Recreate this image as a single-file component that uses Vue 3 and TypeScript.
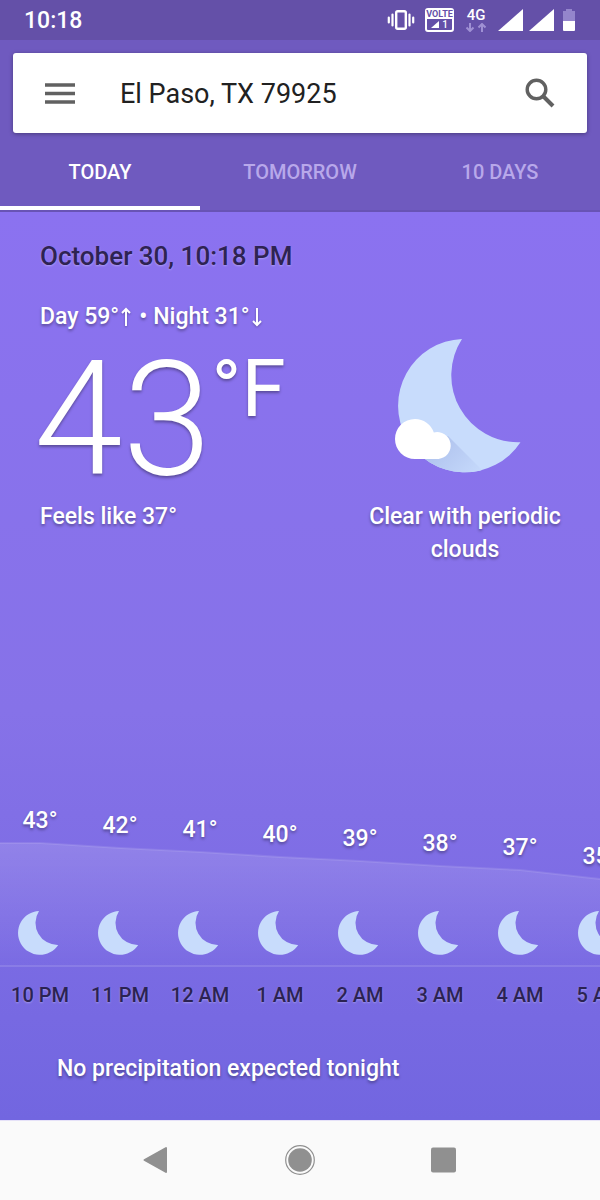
<script setup lang="ts">
import { computed, ref } from 'vue'

interface Hour {
  label: string
  temp: number
}

const COLUMN = 80
const PEAK = 43
const STEP = 4.5
const CHART_HEIGHT = 126

const place = ref('El Paso, TX 79925')
const tabs = ['Today', 'Tomorrow', '10 Days']
const active = ref('Today')

const hours: Hour[] = [
  { label: '10 PM', temp: 43 },
  { label: '11 PM', temp: 42 },
  { label: '12 AM', temp: 41 },
  { label: '1 AM', temp: 40 },
  { label: '2 AM', temp: 39 },
  { label: '3 AM', temp: 38 },
  { label: '4 AM', temp: 37 },
  { label: '5 AM', temp: 35 },
]

const drop = (temp: number): number => Math.round((PEAK - temp) * STEP)
const chartWidth = hours.length * COLUMN

const line = computed(() => {
  const points = hours.map((h, i) => `${i * COLUMN + COLUMN / 2},${drop(h.temp) + 1}`)
  const last = drop(hours[hours.length - 1].temp) + 5
  return `0,1 ${points.join(' ')} ${chartWidth},${last}`
})
const area = computed(() => `${line.value} ${chartWidth},${CHART_HEIGHT} 0,${CHART_HEIGHT}`)

const moon = 'M67 3A66.700 66.700 0 1 0 125.500 106.300A67 67 0 0 1 67 3Z'
</script>

<template>
  <div class="screen">
    <div class="status">
      <span class="clock">10:18</span>
      <div class="indicators">
        <svg class="vibrate" viewBox="0 0 28 22" width="28" height="22" aria-hidden="true">
          <rect x="9.200" y="2.200" width="9.600" height="17.600" rx="1.500" fill="none" stroke="#fff" stroke-width="2.400" />
          <path d="M5.500 5.500v11M1.800 8.500v5M22.500 5.500v11M26.200 8.500v5" stroke="#fff" stroke-width="2.200" fill="none" stroke-linecap="round" />
        </svg>
        <div class="volte">
          <span class="volte-name">VOLTE</span>
          <span class="volte-sim">
            <svg viewBox="0 0 8 7" width="8" height="7" aria-hidden="true"><path d="M8 0v7H0z" fill="#fff" /></svg>
            1
          </span>
        </div>
        <div class="network">
          <span>4G</span>
          <svg viewBox="0 0 22 9" width="22" height="9" aria-hidden="true">
            <path d="M5 0v8M1.500 4.500L5 8l3.500-3.500M17 9V1M13.500 4.500L17 1l3.500 3.500" fill="none" stroke="#9f90d4" stroke-width="2" />
          </svg>
        </div>
        <svg class="signal" viewBox="0 0 25 22" width="25" height="22" aria-hidden="true"><path d="M25 0v22H0z" fill="#fff" /></svg>
        <svg class="signal" viewBox="0 0 25 22" width="25" height="22" aria-hidden="true"><path d="M25 0v22H0z" fill="#fff" /></svg>
        <svg class="battery" viewBox="0 0 12 22" width="12" height="22" aria-hidden="true">
          <path d="M3 0h6v2h3v10H0V2h3z" fill="#9485cc" />
          <path d="M0 12h12v9a1 1 0 0 1-1 1H1a1 1 0 0 1-1-1z" fill="#fff" />
        </svg>
      </div>
    </div>

    <header class="header">
      <form class="search" @submit.prevent>
        <button type="button" class="icon-button" aria-label="Menu">
          <svg viewBox="0 0 30 21" width="30" height="21"><path d="M0 2h30M0 10.500h30M0 19h30" stroke="#616161" stroke-width="3.300" /></svg>
        </button>
        <input v-model="place" class="place" type="text" aria-label="Location" />
        <button type="submit" class="icon-button" aria-label="Search">
          <svg viewBox="0 0 30 30" width="30" height="30">
            <circle cx="11.500" cy="11.500" r="9.300" fill="none" stroke="#616161" stroke-width="3.400" />
            <path d="M18.500 18.500L28 28" stroke="#616161" stroke-width="4" />
          </svg>
        </button>
      </form>
      <nav class="tabs" role="tablist">
        <button
          v-for="tab in tabs"
          :key="tab"
          type="button"
          role="tab"
          class="tab"
          :class="{ active: tab === active }"
          :aria-selected="tab === active"
          @click="active = tab"
        >
          {{ tab }}
        </button>
      </nav>
    </header>

    <main class="content">
      <section class="current">
        <div class="reading">
          <h1 class="date">October 30, 10:18 PM</h1>
          <p class="range">
            <span>Day 59°</span>
            <svg class="arrow" viewBox="0 0 14 20" width="14" height="20" aria-label="high"><path d="M7 19V2M3 6l4-4 4 4" /></svg>
            <span class="dot">•</span>
            <span>Night 31°</span>
            <svg class="arrow" viewBox="0 0 14 20" width="14" height="20" aria-label="low"><path d="M7 1v17M3 14l4 4 4-4" /></svg>
          </p>
          <div class="temperature">
            <span class="degrees">43</span><span class="unit">°F</span>
          </div>
          <p class="feels">Feels like 37°</p>
        </div>
        <div class="condition">
          <svg class="condition-icon" viewBox="0 0 140 140" width="140" height="140" aria-hidden="true">
            <defs>
              <linearGradient id="cloud-shade" gradientUnits="userSpaceOnUse" x1="45" y1="105" x2="80" y2="140">
                <stop offset="0" stop-color="#b0c3ee" />
                <stop offset="1" stop-color="#c5d9fb" />
              </linearGradient>
              <clipPath id="moon-clip"><path :d="moon" /></clipPath>
            </defs>
            <path :d="moon" fill="#c8dcfc" />
            <path d="M53 100L96 143H50L20 118z" fill="url(#cloud-shade)" clip-path="url(#moon-clip)" />
            <path d="M20 83a20 20 0 0 1 18.800 13.500A13.500 13.500 0 1 1 43.500 123H20a20 20 0 0 1 0-40z" fill="#fff" />
          </svg>
          <p class="summary">Clear with periodic clouds</p>
        </div>
      </section>

      <section class="hourly" aria-label="Hourly forecast">
        <svg class="chart" :viewBox="`0 0 ${chartWidth} ${CHART_HEIGHT}`" :width="chartWidth" :height="CHART_HEIGHT" aria-hidden="true">
          <defs>
            <linearGradient id="chart-fill" x1="0" y1="0" x2="0" y2="1">
              <stop offset="0" stop-color="#fff" stop-opacity="0.14" />
              <stop offset="1" stop-color="#fff" stop-opacity="0" />
            </linearGradient>
          </defs>
          <polygon :points="area" fill="url(#chart-fill)" />
          <polyline :points="line" fill="none" stroke="#fff" stroke-opacity="0.1" stroke-width="2" />
        </svg>
        <ol class="hours">
          <li v-for="hour in hours" :key="hour.label" class="hour">
            <div class="plot">
              <span class="hour-temp" :style="{ marginTop: `${drop(hour.temp)}px` }">{{ hour.temp }}°</span>
              <svg class="hour-icon" viewBox="3 3 134 134" width="44" height="44" aria-hidden="true"><path :d="moon" fill="#c8dcfc" /></svg>
            </div>
            <span class="hour-label">{{ hour.label }}</span>
          </li>
        </ol>
      </section>

      <p class="outlook">No precipitation expected tonight</p>
    </main>

    <footer class="navbar">
      <button type="button" class="nav-button" aria-label="Back">
        <svg viewBox="0 0 32 32" width="32" height="32"><path d="M4.500 16L26 4v24z" fill="#909090" stroke="#909090" stroke-width="2" stroke-linejoin="round" /></svg>
      </button>
      <button type="button" class="nav-button" aria-label="Home">
        <svg viewBox="0 0 32 32" width="32" height="32">
          <circle cx="16" cy="16" r="14.300" fill="none" stroke="#909090" stroke-width="1.200" />
          <circle cx="16" cy="16" r="11.800" fill="#909090" />
        </svg>
      </button>
      <button type="button" class="nav-button" aria-label="Recent apps">
        <svg viewBox="0 0 32 32" width="32" height="32"><rect x="3" y="3.500" width="25" height="25" rx="2" fill="#909090" /></svg>
      </button>
    </footer>
  </div>
</template>

<style>
body {
  margin: 0;
}
</style>

<style scoped>
.screen {
  display: flex;
  flex-direction: column;
  min-height: 100vh;
  overflow: hidden;
  font-family: Roboto, "Liberation Sans", sans-serif;
  font-weight: 500;
  color: #fff;
}

h1,
p,
ol {
  margin: 0;
  padding: 0;
  font-weight: 500;
}

svg {
  display: block;
  flex: none;
}

button {
  padding: 0;
  border: 0;
  background: none;
  font: inherit;
  color: inherit;
  cursor: pointer;
}

.status {
  display: flex;
  align-items: center;
  justify-content: space-between;
  height: 40px;
  padding: 0 24px;
  background: #6450a8;
}

.clock {
  font-size: 23px;
  line-height: 40px;
  padding-top: 2px;
}

.indicators {
  display: flex;
  align-items: center;
  gap: 6px;
}

.vibrate {
  margin-right: 4px;
}

.volte {
  box-sizing: border-box;
  display: flex;
  flex-direction: column;
  width: 29px;
  height: 24px;
  border: 2px solid #fff;
  border-radius: 3px;
}

.volte-name {
  display: flex;
  justify-content: center;
  background: #fff;
  color: #6450a8;
  font-size: 9px;
  font-weight: 700;
  line-height: 9px;
}

.volte-sim {
  display: flex;
  align-items: center;
  justify-content: center;
  gap: 3px;
  font-size: 10px;
  line-height: 11px;
}

.network {
  display: flex;
  flex-direction: column;
  align-items: center;
  gap: 1px;
  margin: 0 5px;
  font-size: 15px;
  line-height: 13px;
}

.battery {
  margin: 0 1px 0 3px;
}

.header {
  box-sizing: border-box;
  padding-top: 13px;
  background: #6f5abf;
  border-bottom: 2px solid #6853b5;
}

.search {
  display: flex;
  align-items: center;
  height: 80px;
  margin: 0 13px;
  padding: 0 15px;
  box-sizing: border-box;
  background: #fff;
  border-radius: 3px;
  box-shadow: 0 1px 4px rgba(0, 0, 0, 0.35);
}

.icon-button {
  display: flex;
  align-items: center;
  justify-content: center;
  flex: none;
  width: 64px;
  height: 64px;
}

.place {
  flex: 1;
  min-width: 0;
  margin-left: 28px;
  padding: 2px 0 0;
  border: 0;
  outline: 0;
  background: none;
  font: 400 27px/32px Roboto, "Liberation Sans", sans-serif;
  color: #212121;
}

.tabs {
  display: grid;
  grid-template-columns: repeat(3, 1fr);
}

.tab {
  height: 77px;
  border-top: 4px solid transparent;
  border-bottom: 4px solid transparent;
  font-size: 20px;
  line-height: 24px;
  text-transform: uppercase;
  color: #b8a8ea;
}

.tab.active {
  border-bottom-color: #fff;
  color: #fff;
}

.content {
  display: flex;
  flex-direction: column;
  flex: 1;
  background: linear-gradient(#8b72f0, #8672e8 55%, #7266e0);
}

.current {
  display: flex;
  justify-content: space-between;
  padding: 28px 20px 0 40px;
  font-size: 23px;
  line-height: 32px;
  text-shadow: 0 2px 3px rgba(0, 0, 0, 0.35);
}

.date {
  font-size: 26px;
  line-height: 32px;
  color: #2e2352;
  text-shadow: 0 1px 2px rgba(255, 255, 255, 0.3);
  white-space: nowrap;
}

.range {
  display: flex;
  align-items: center;
  margin-top: 29px;
}

.arrow {
  fill: none;
  stroke: #fff;
  stroke-width: 2;
  filter: drop-shadow(0 1px 1px rgba(0, 0, 0, 0.3));
}

.dot {
  margin: 0 6px;
}

.temperature {
  display: flex;
  align-items: flex-start;
  height: 168px;
}

.degrees {
  margin-left: -6px;
  font-size: 160px;
  font-weight: 300;
  line-height: 174px;
}

.unit {
  font-size: 80px;
  font-weight: 400;
  line-height: 112px;
}

.condition {
  display: flex;
  flex-direction: column;
  align-items: center;
  width: 230px;
  padding-top: 96px;
}

.summary {
  margin-top: 24px;
  line-height: 33px;
  text-align: center;
}

.hourly {
  position: relative;
  margin-top: auto;
  overflow: hidden;
}

.chart {
  position: absolute;
  left: 0;
  top: 37px;
}

.hours {
  position: relative;
  display: flex;
  list-style: none;
}

.hour {
  flex: none;
  width: 80px;
  text-align: center;
}

.plot {
  box-sizing: border-box;
  display: flex;
  flex-direction: column;
  align-items: center;
  justify-content: space-between;
  height: 162px;
  padding-bottom: 10px;
  border-bottom: 2px solid rgba(255, 255, 255, 0.12);
}

.hour-temp {
  font-size: 23px;
  line-height: 32px;
  text-shadow: 0 2px 3px rgba(0, 0, 0, 0.35);
}

.hour-label {
  display: block;
  font-size: 20px;
  line-height: 56px;
  color: #2b2352;
  text-shadow: 0 1px 2px rgba(255, 255, 255, 0.3);
}

.outlook {
  padding: 30px 57px 35px;
  font-size: 23px;
  line-height: 32px;
  text-shadow: 0 2px 3px rgba(0, 0, 0, 0.35);
}

.navbar {
  box-sizing: border-box;
  display: flex;
  align-items: center;
  justify-content: center;
  gap: 80px;
  height: 80px;
  padding-bottom: 1px;
  border-top: 1px solid #e6e2f8;
  background: #fafafa;
}

.nav-button {
  display: flex;
  align-items: center;
  justify-content: center;
  width: 64px;
  height: 64px;
}
</style>
